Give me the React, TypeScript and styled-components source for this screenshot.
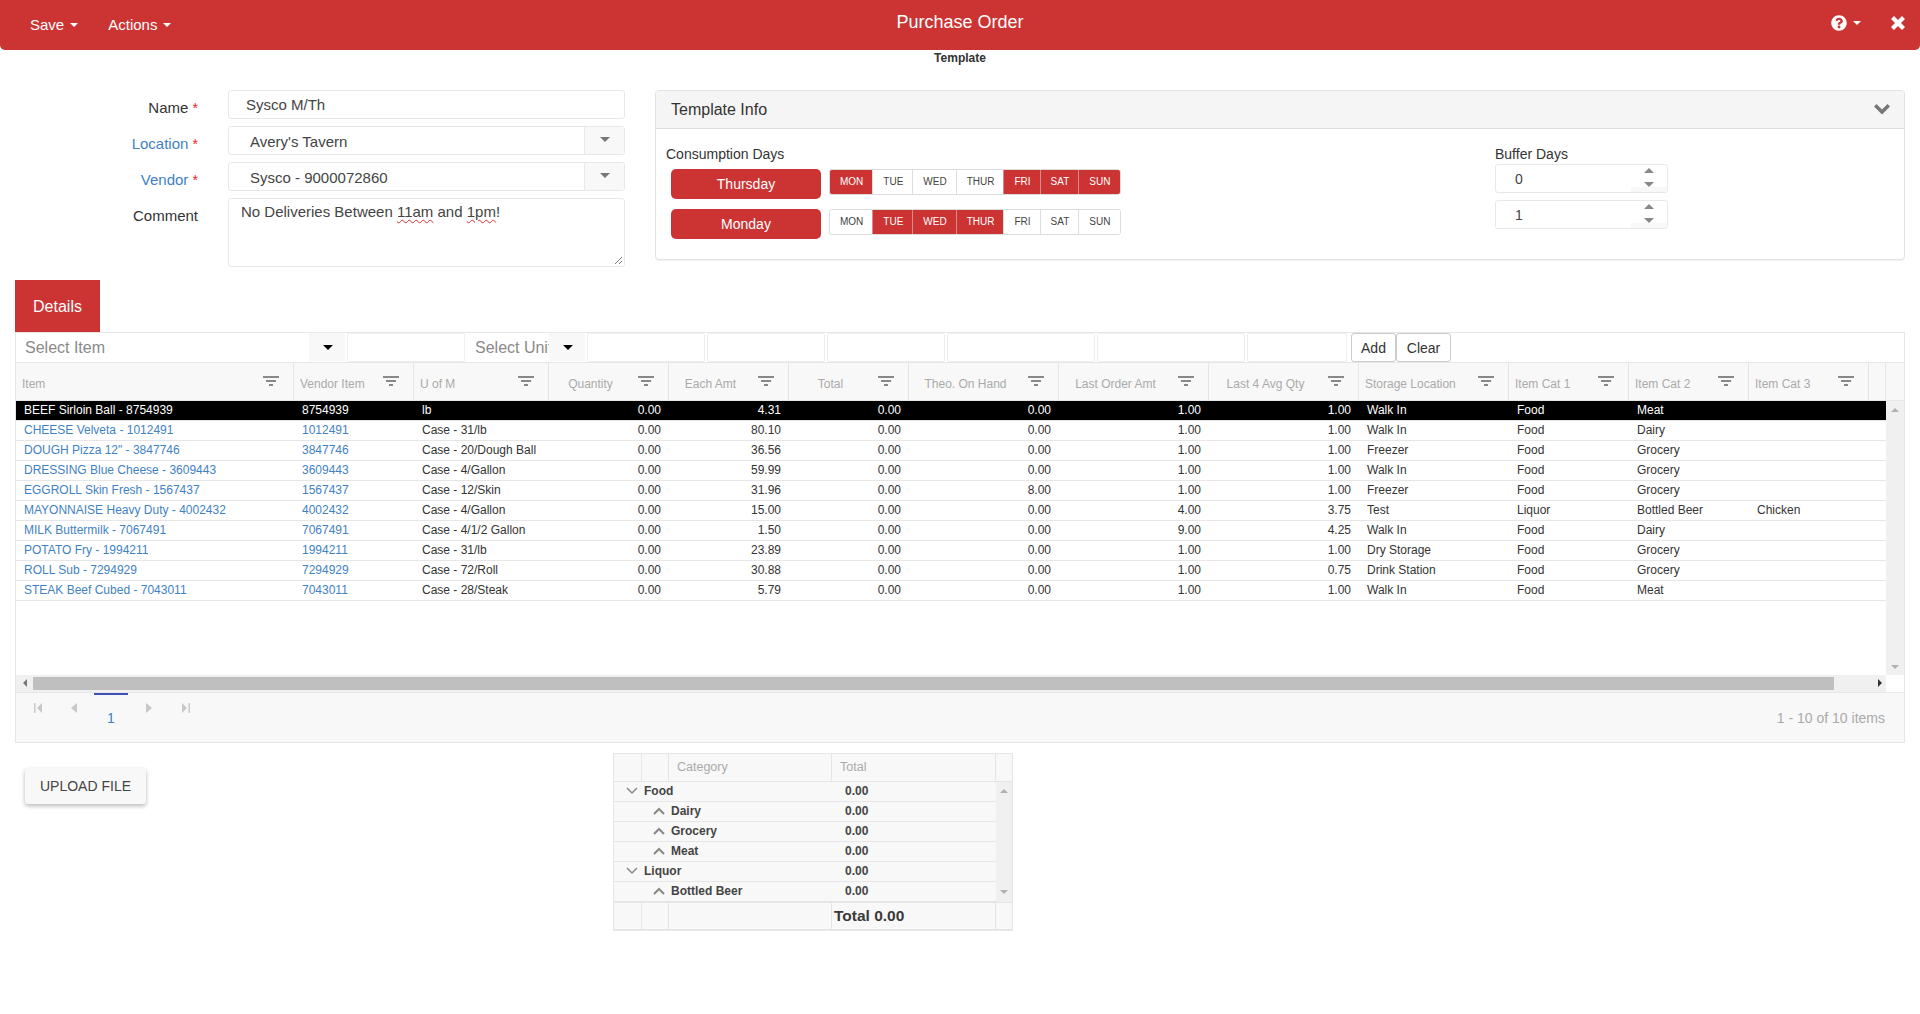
import React from "react";
import styled, { createGlobalStyle } from "styled-components";
import { FaQuestionCircle } from "react-icons/fa";

const RED = "#cc3333";
const LINE = "#e6e6e6";
const LINK = "#3f82c4";

const Global = createGlobalStyle`
  html, body { margin: 0; padding: 0; background: #fff; overflow: hidden; }
  * { box-sizing: border-box; }
  body { font-family: "Liberation Sans", Arial, sans-serif; color: #333; }
`;

const Page = styled.div`
  width: 1920px;
  height: 1014px;
`;

/* ---------- top bar ---------- */
const TopBar = styled.header`
  height: 50px;
  background: ${RED};
  border-radius: 0 0 5px 5px;
  color: #fff;
  display: grid;
  grid-template-columns: 1fr auto 1fr;
  align-items: center;
  padding: 0 15px;
`;
const Menus = styled.div`
  display: flex;
  gap: 30px;
  padding-left: 15px;
  margin-top: -1px;
`;
const Menu = styled.div`
  font-size: 15px;
  display: flex;
  align-items: center;
  gap: 6px;
`;
const Title = styled.div`
  font-size: 18px;
  line-height: 20px;
  margin-top: -7px;
`;
const TopRight = styled.div`
  display: flex;
  justify-content: flex-end;
  align-items: center;
  gap: 30px;
  margin-top: -4px;
`;
const HelpMenu = styled.div`
  display: flex;
  align-items: center;
  gap: 6px;
`;
const Caret = styled.span<{ $size?: number; $color?: string }>`
  display: inline-block;
  width: 0;
  height: 0;
  border-left: ${(p) => p.$size ?? 4}px solid transparent;
  border-right: ${(p) => p.$size ?? 4}px solid transparent;
  border-top: ${(p) => p.$size ?? 4}px solid ${(p) => p.$color ?? "#fff"};
`;
const CaretUp = styled(Caret)`
  border-top: 0;
  border-bottom: ${(p) => p.$size ?? 4}px solid ${(p) => p.$color ?? "#fff"};
`;
const Subtitle = styled.div`
  height: 40px;
  padding-top: 1px;
  text-align: center;
  font-size: 12px;
  font-weight: 700;
  line-height: 15px;
`;

/* ---------- form + template info ---------- */
const TopSection = styled.section`
  display: flex;
  height: 190px;
  align-items: flex-start;
`;
const Form = styled.div`
  width: 625px;
  display: grid;
  grid-template-columns: 198px 1fr;
  column-gap: 30px;
  row-gap: 7px;
`;
const Label = styled.div<{ $link?: boolean }>`
  font-size: 15px;
  line-height: 20px;
  padding-top: 8px;
  text-align: right;
  color: ${(p) => (p.$link ? LINK : "#333")};
`;
const Star = styled.span`
  color: #e8262a;
  font-size: 14px;
`;
const Field = styled.div`
  height: 29px;
  border: 1px solid #e8e8e8;
  border-radius: 3px;
  background: #fff;
  font-size: 15px;
  line-height: 27px;
  color: #444;
  padding-left: 17px;
`;
const SelectField = styled.div`
  height: 29px;
  border: 1px solid #e8e8e8;
  border-radius: 3px;
  display: flex;
  font-size: 15px;
  line-height: 29px;
  color: #444;
`;
const SelectText = styled.div`
  flex: 1;
  padding-left: 21px;
`;
const SelectArrow = styled.div`
  width: 40px;
  background: #f8f8f8;
  border-left: 1px solid #e8e8e8;
  display: flex;
  align-items: center;
  justify-content: center;
  padding-bottom: 3px;
`;
const CommentBox = styled.div`
  position: relative;
  height: 69px;
  border: 1px solid #e8e8e8;
  border-radius: 3px;
  font-size: 15px;
  line-height: 20px;
  color: #444;
  padding: 3px 12px;
`;
const Misspelt = styled.span`
  text-decoration: underline wavy #e03030 1px;
  text-underline-offset: 2px;
`;
const Grip = styled.svg`
  position: absolute;
  right: 1px;
  bottom: 1px;
  width: 9px;
  height: 9px;
`;

const Panel = styled.section`
  margin-left: 30px;
  width: 1250px;
  height: 170px;
  border: 1px solid #e2e2e2;
  border-radius: 4px;
  box-shadow: 0 1px 1px rgba(0, 0, 0, 0.05);
`;
const PanelHead = styled.div`
  height: 38px;
  background: #f5f5f5;
  border-bottom: 1px solid #ddd;
  border-radius: 3px 3px 0 0;
  display: flex;
  align-items: center;
  justify-content: space-between;
  padding: 0 14px 0 15px;
  font-size: 16px;
  color: #333;
`;
const PanelBody = styled.div`
  display: grid;
  grid-template-columns: 1fr 173px;
  padding: 15px 236px 0 10px;
`;
const SmallHead = styled.div`
  font-size: 14px;
  line-height: 20px;
`;
const DayRow = styled.div<{ $top: number }>`
  display: flex;
  gap: 8px;
  padding-left: 5px;
  margin-top: ${(p) => p.$top}px;
`;
const RedButton = styled.div`
  width: 150px;
  height: 30px;
  background: ${RED};
  color: #fff;
  border-radius: 5px;
  font-size: 14px;
  line-height: 30px;
  text-align: center;
`;
const DayGroup = styled.div`
  display: flex;
  height: 26px;
  border-radius: 3px;
  overflow: hidden;
  border: 1px solid #ddd;
`;
const Day = styled.div<{ $on: boolean }>`
  font-size: 10px;
  line-height: 24px;
  padding: 0 10px;
  background: ${(p) => (p.$on ? RED : "#fff")};
  color: ${(p) => (p.$on ? "#fff" : "#444")};
  box-shadow: -1px 0 0 ${(p) => (p.$on ? "#d98a8a" : "#ddd")};
`;
const BufferList = styled.div`
  display: flex;
  flex-direction: column;
  gap: 7px;
`;
const BufferBox = styled.div`
  position: relative;
  height: 29px;
  border: 1px solid #e8e8e8;
  border-radius: 3px;
  font-size: 14px;
  line-height: 28px;
  padding-left: 19px;
  color: #444;
`;
const Spin = styled.div`
  position: absolute;
  top: 0;
  right: 0;
  width: 36px;
  height: 27px;
  display: flex;
  flex-direction: column;
  align-items: center;
  justify-content: space-between;
  padding: 3px 0 5px;
  background: linear-gradient(to top, #f8f8f8 5px, transparent 5px);
`;

/* ---------- details grid ---------- */
const Tab = styled.div`
  width: 85px;
  height: 53px;
  margin-left: 15px;
  background: ${RED};
  color: #fff;
  font-size: 16px;
  line-height: 53px;
  text-align: center;
`;
const Grid = styled.section`
  margin: -1px 0 0 15px;
  width: 1890px;
  height: 411px;
  border: 1px solid ${LINE};
  display: flex;
  flex-direction: column;
`;
const Toolbar = styled.div`
  height: 30px;
  border-bottom: 1px solid ${LINE};
  display: flex;
  gap: 2px;
`;
const FilterBox = styled.div<{ $w: number }>`
  width: ${(p) => p.$w}px;
  height: 29px;
  border: 1px solid #efefef;
  border-radius: 2px;
`;
const Combo = styled.div<{ $w: number; $pad: number }>`
  width: ${(p) => p.$w}px;
  display: flex;
  height: 29px;
  padding-left: ${(p) => p.$pad}px;
`;
const ComboText = styled.div`
  flex: 1;
  overflow: hidden;
  white-space: nowrap;
  font-size: 16px;
  line-height: 30px;
  color: #8a8a8a;
`;
const ComboArrow = styled.div`
  width: 36px;
  height: 28px;
  background: #f8f8f8;
  display: flex;
  align-items: center;
  justify-content: center;
  padding-left: 2px;
`;
const ToolButtons = styled.div`
  display: flex;
  margin-left: 2px;
`;
const ToolButton = styled.div<{ $w: number }>`
  width: ${(p) => p.$w}px;
  height: 29px;
  border: 1px solid #ccc;
  border-radius: 3px;
  background: #fff;
  font-size: 14px;
  line-height: 28px;
  text-align: center;
  color: #333;
`;

const COLS = "278px 120px 135px 120px 120px 120px 150px 150px 150px 150px 120px 120px 120px";
const HeaderRow = styled.div`
  height: 38px;
  display: grid;
  grid-template-columns: ${COLS} 17px 18px;
  background: #f8f8f8;
  border-bottom: 1px solid ${LINE};
`;
const HeadCell = styled.div`
  display: flex;
  align-items: center;
  border-right: 1px solid ${LINE};
  padding: 0 14px 0 6px;
  min-width: 0;
`;
const HeadBlank = styled.div<{ $edge?: boolean }>`
  border-right: ${(p) => (p.$edge ? `1px solid ${LINE}` : "0")};
`;
const HeadLabel = styled.div<{ $center?: boolean }>`
  flex: 1;
  font-size: 12px;
  line-height: 16px;
  padding-top: 4px;
  color: #aaa;
  white-space: nowrap;
  text-align: ${(p) => (p.$center ? "center" : "left")};
  padding-right: ${(p) => (p.$center ? 12 : 0)}px;
`;
const Body = styled.div`
  display: flex;
  height: 274px;
`;
const Rows = styled.div`
  flex: 1;
  min-width: 0;
`;
const Row = styled.div<{ $selected?: boolean }>`
  display: grid;
  grid-template-columns: ${COLS} 17px;
  height: 20px;
  border-bottom: 1px solid ${LINE};
  background: ${(p) => (p.$selected ? "#000" : "#fff")};
  color: ${(p) => (p.$selected ? "#fff" : "#333")};
`;
const Cell = styled.div<{ $right?: boolean; $link?: boolean }>`
  padding: 0 8px;
  font-size: 12px;
  line-height: 18px;
  white-space: nowrap;
  overflow: hidden;
  text-align: ${(p) => (p.$right ? "right" : "left")};
  color: ${(p) => (p.$link ? LINK : "inherit")};
`;
const SelectedCell = styled(Cell)`
  color: #fff;
`;
const VScroll = styled.div`
  width: 18px;
  background: #f0f0f0;
  display: flex;
  flex-direction: column;
  align-items: center;
  justify-content: space-between;
  padding: 7px 0 6px;
`;
const HScroll = styled.div`
  height: 17px;
  display: flex;
`;
const HTrack = styled.div`
  flex: 1;
  background: #f0f0f0;
  display: flex;
  align-items: center;
  justify-content: space-between;
  padding: 0 4px 2px 7px;
`;
const HThumb = styled.div`
  width: 1801px;
  height: 13px;
  margin: 2px auto 0 6px;
  background: #bfbfbf;
`;
const Corner = styled.div`
  width: 18px;
  background: #fff;
`;
const Triangle = styled.svg`
  flex: none;
  display: block;
`;
const Pager = styled.div`
  flex: 1;
  background: #f8f8f8;
  border-top: 1px solid ${LINE};
  display: flex;
  justify-content: space-between;
`;
const PagerLeft = styled.div`
  position: relative;
  width: 200px;
`;
const PagerIcon = styled.svg<{ $x: number }>`
  position: absolute;
  top: 10px;
  left: ${(p) => p.$x}px;
`;
const PageNum = styled.div`
  position: absolute;
  top: 0;
  left: 78px;
  width: 34px;
  height: 100%;
  border-top: 2px solid #3f51b5;
  text-align: center;
  font-size: 14px;
  line-height: 16px;
  padding-top: 15px;
  color: ${LINK};
`;
const PagerInfo = styled.div`
  font-size: 14px;
  line-height: 16px;
  padding: 17px 19px 0 0;
  color: #aaa;
`;

/* ---------- bottom ---------- */
const Bottom = styled.section`
  display: flex;
  align-items: flex-start;
  padding: 10px 0 0 25px;
`;
const UploadButton = styled.div`
  width: 121px;
  height: 36px;
  margin-top: 15px;
  background: #f8f8f8;
  border-radius: 3px;
  box-shadow: 0 2px 4px rgba(0, 0, 0, 0.28);
  font-size: 14px;
  line-height: 36px;
  text-align: center;
  color: #444;
`;
const Summary = styled.section`
  margin-left: 467px;
  width: 400px;
  height: 178px;
  border: 1px solid ${LINE};
  border-bottom-width: 2px;
  background: #f8f8f8;
  display: flex;
  flex-direction: column;
`;
const SCOLS = "28px 27px 163px 164px 16px";
const SumHead = styled.div`
  height: 28px;
  display: grid;
  grid-template-columns: ${SCOLS};
  border-bottom: 1px solid ${LINE};
`;
const SumHeadCell = styled.div`
  border-right: 1px solid ${LINE};
  padding-left: 8px;
  font-size: 12.5px;
  line-height: 26px;
  color: #aaa;
`;
const SumBody = styled.div`
  display: flex;
  height: 121px;
`;
const SumRows = styled.div`
  flex: 1;
`;
const SumRow = styled.div`
  display: grid;
  grid-template-columns: 218px 164px;
  height: 20px;
  border-bottom: 1px solid ${LINE};
  font-size: 12px;
  font-weight: 700;
  line-height: 18px;
  color: #444;
`;
const SumName = styled.div<{ $level: number }>`
  display: flex;
  align-items: center;
  gap: 6px;
  padding-left: ${(p) => (p.$level ? 39 : 12)}px;
`;
const SumValue = styled.div`
  padding-left: 13px;
`;
const SumScroll = styled.div`
  width: 16px;
  background: #f0f0f0;
  display: flex;
  flex-direction: column;
  align-items: center;
  justify-content: space-between;
  padding: 7px 0 8px;
`;
const SumFoot = styled.div`
  flex: 1;
  display: grid;
  grid-template-columns: ${SCOLS};
  border-top: 1px solid ${LINE};
`;
const SumFootCell = styled.div`
  border-right: 1px solid ${LINE};
  padding-left: 2px;
  font-size: 15.5px;
  font-weight: 700;
  line-height: 26px;
  white-space: nowrap;
  color: #3a3a3a;
`;

/* ---------- drawings ---------- */
const FilterIcon = () => (
  <svg width="16" height="11" viewBox="0 0 16 11" fill="#888">
    <rect x="0" y="0" width="16" height="2" />
    <rect x="3" y="4" width="10" height="2" />
    <rect x="6" y="8" width="4" height="2" />
  </svg>
);
const Chevron = ({ up }: { up?: boolean }) => (
  <svg width="12" height="8" viewBox="0 0 12 8" fill="none" stroke="#888" strokeWidth={up ? 2 : 1.5}>
    <path d={up ? "M1 7 L6 2 L11 7" : "M1 1 L6 6 L11 1"} />
  </svg>
);
const ArrowUp = ({ c = "#b0b0b0" }: { c?: string }) => (
  <Triangle width="8" height="4" viewBox="0 0 8 4" fill={c}>
    <path d="M0 4 L4 0 L8 4Z" />
  </Triangle>
);
const ArrowDown = ({ c = "#b0b0b0" }: { c?: string }) => (
  <Triangle width="8" height="4" viewBox="0 0 8 4" fill={c}>
    <path d="M0 0 L4 4 L8 0Z" />
  </Triangle>
);
const ArrowSide = ({ right, c }: { right?: boolean; c: string }) => (
  <Triangle width="4" height="8" viewBox="0 0 4 8" fill={c}>
    <path d={right ? "M0 0 L4 4 L0 8Z" : "M4 0 L0 4 L4 8Z"} />
  </Triangle>
);

const headers: [string, boolean][] = [
  ["Item", false], ["Vendor Item", false], ["U of M", false], ["Quantity", true],
  ["Each Amt", true], ["Total", true], ["Theo. On Hand", true], ["Last Order Amt", true],
  ["Last 4 Avg Qty", true], ["Storage Location", false], ["Item Cat 1", false],
  ["Item Cat 2", false], ["Item Cat 3", false],
];

const rows: string[][] = [
  ["BEEF Sirloin Ball - 8754939", "8754939", "lb", "0.00", "4.31", "0.00", "0.00", "1.00", "1.00", "Walk In", "Food", "Meat", ""],
  ["CHEESE Velveta - 1012491", "1012491", "Case - 31/lb", "0.00", "80.10", "0.00", "0.00", "1.00", "1.00", "Walk In", "Food", "Dairy", ""],
  ['DOUGH Pizza 12" - 3847746', "3847746", "Case - 20/Dough Ball", "0.00", "36.56", "0.00", "0.00", "1.00", "1.00", "Freezer", "Food", "Grocery", ""],
  ["DRESSING Blue Cheese - 3609443", "3609443", "Case - 4/Gallon", "0.00", "59.99", "0.00", "0.00", "1.00", "1.00", "Walk In", "Food", "Grocery", ""],
  ["EGGROLL Skin Fresh - 1567437", "1567437", "Case - 12/Skin", "0.00", "31.96", "0.00", "8.00", "1.00", "1.00", "Freezer", "Food", "Grocery", ""],
  ["MAYONNAISE Heavy Duty - 4002432", "4002432", "Case - 4/Gallon", "0.00", "15.00", "0.00", "0.00", "4.00", "3.75", "Test", "Liquor", "Bottled Beer", "Chicken"],
  ["MILK Buttermilk - 7067491", "7067491", "Case - 4/1/2 Gallon", "0.00", "1.50", "0.00", "0.00", "9.00", "4.25", "Walk In", "Food", "Dairy", ""],
  ["POTATO Fry - 1994211", "1994211", "Case - 31/lb", "0.00", "23.89", "0.00", "0.00", "1.00", "1.00", "Dry Storage", "Food", "Grocery", ""],
  ["ROLL Sub - 7294929", "7294929", "Case - 72/Roll", "0.00", "30.88", "0.00", "0.00", "1.00", "0.75", "Drink Station", "Food", "Grocery", ""],
  ["STEAK Beef Cubed - 7043011", "7043011", "Case - 28/Steak", "0.00", "5.79", "0.00", "0.00", "1.00", "1.00", "Walk In", "Food", "Meat", ""],
];

const DAY_NAMES = ["MON", "TUE", "WED", "THUR", "FRI", "SAT", "SUN"];
const schedules: { name: string; on: string[] }[] = [
  { name: "Thursday", on: ["MON", "FRI", "SAT", "SUN"] },
  { name: "Monday", on: ["TUE", "WED", "THUR"] },
];

const tree: [string, number][] = [
  ["Food", 0], ["Dairy", 1], ["Grocery", 1], ["Meat", 1], ["Liquor", 0], ["Bottled Beer", 1],
];

const isNumeric = (i: number) => i >= 3 && i <= 8;

export default function App() {
  return (
    <Page>
      <Global />
      <TopBar>
        <Menus>
          <Menu>Save <Caret /></Menu>
          <Menu>Actions <Caret /></Menu>
        </Menus>
        <Title>Purchase Order</Title>
        <TopRight>
          <HelpMenu>
            <FaQuestionCircle size={16} />
            <Caret />
          </HelpMenu>
          <svg width="14" height="14" viewBox="0 0 14 14" fill="#fff">
            <path d="M3 0 L7 4 L11 0 L14 3 L10 7 L14 11 L11 14 L7 10 L3 14 L0 11 L4 7 L0 3Z" />
          </svg>
        </TopRight>
      </TopBar>
      <Subtitle>Template</Subtitle>

      <TopSection>
        <Form>
          <Label>Name <Star>*</Star></Label>
          <Field>Sysco M/Th</Field>
          <Label $link>Location <Star>*</Star></Label>
          <SelectField>
            <SelectText>Avery's Tavern</SelectText>
            <SelectArrow><Caret $size={5} $color="#777" /></SelectArrow>
          </SelectField>
          <Label $link>Vendor <Star>*</Star></Label>
          <SelectField>
            <SelectText>Sysco - 9000072860</SelectText>
            <SelectArrow><Caret $size={5} $color="#777" /></SelectArrow>
          </SelectField>
          <Label>Comment</Label>
          <CommentBox>
            No Deliveries Between <Misspelt>11am</Misspelt> and <Misspelt>1pm</Misspelt>!
            <Grip viewBox="0 0 9 9" stroke="#777" strokeWidth="1">
              <path d="M1 8 L8 1 M5 8 L8 5" />
            </Grip>
          </CommentBox>
        </Form>

        <Panel>
          <PanelHead>
            Template Info
            <svg width="16" height="11" viewBox="0 0 16 11" fill="#777">
              <path d="M2.5 0 L8 5.5 L13.5 0 L16 2.5 L8 10.5 L0 2.5Z" />
            </svg>
          </PanelHead>
          <PanelBody>
            <div>
              <SmallHead>Consumption Days</SmallHead>
              {schedules.map((s, i) => (
                <DayRow key={s.name} $top={i === 0 ? 5 : 10}>
                  <RedButton>{s.name}</RedButton>
                  <DayGroup>
                    {DAY_NAMES.map((d) => <Day key={d} $on={s.on.includes(d)}>{d}</Day>)}
                  </DayGroup>
                </DayRow>
              ))}
            </div>
            <div>
              <SmallHead>Buffer Days</SmallHead>
              <BufferList>
                {["0", "1"].map((v) => (
                  <BufferBox key={v}>
                    {v}
                    <Spin>
                      <CaretUp $size={5} $color="#888" />
                      <Caret $size={5} $color="#888" />
                    </Spin>
                  </BufferBox>
                ))}
              </BufferList>
            </div>
          </PanelBody>
        </Panel>
      </TopSection>

      <Tab>Details</Tab>
      <Grid>
        <Toolbar>
          <Combo $w={329} $pad={9}>
            <ComboText>Select Item</ComboText>
            <ComboArrow><Caret $size={5} $color="#000" /></ComboArrow>
          </Combo>
          <FilterBox $w={118} />
          <Combo $w={118} $pad={8}>
            <ComboText>Select Unit</ComboText>
            <ComboArrow><Caret $size={5} $color="#000" /></ComboArrow>
          </Combo>
          <FilterBox $w={118} />
          <FilterBox $w={118} />
          <FilterBox $w={118} />
          <FilterBox $w={148} />
          <FilterBox $w={148} />
          <FilterBox $w={100} />
          <ToolButtons>
            <ToolButton $w={45}>Add</ToolButton>
            <ToolButton $w={55}>Clear</ToolButton>
          </ToolButtons>
        </Toolbar>
        <HeaderRow>
          {headers.map(([h, c]) => (
            <HeadCell key={h}>
              <HeadLabel $center={c}>{h}</HeadLabel>
              <FilterIcon />
            </HeadCell>
          ))}
          <HeadBlank $edge />
          <HeadBlank />
        </HeaderRow>
        <Body>
          <Rows>
            {rows.map((r, ri) => (
              <Row key={r[1]} $selected={ri === 0}>
                {r.map((v, i) =>
                  ri === 0 ? (
                    <SelectedCell key={i} $right={isNumeric(i)}>{v}</SelectedCell>
                  ) : (
                    <Cell key={i} $right={isNumeric(i)} $link={i < 2}>{v}</Cell>
                  )
                )}
              </Row>
            ))}
          </Rows>
          <VScroll>
            <ArrowUp />
            <ArrowDown />
          </VScroll>
        </Body>
        <HScroll>
          <HTrack>
            <ArrowSide c="#777" />
            <HThumb />
            <ArrowSide right c="#333" />
          </HTrack>
          <Corner />
        </HScroll>
        <Pager>
          <PagerLeft>
            <PagerIcon $x={18} width="8" height="10" viewBox="0 0 8 10" fill="#c8c8c8">
              <path d="M0 0 H1.5 V10 H0Z M8 0 V10 L3 5Z" />
            </PagerIcon>
            <PagerIcon $x={55} width="6" height="10" viewBox="0 0 6 10" fill="#c8c8c8">
              <path d="M6 0 V10 L0 5Z" />
            </PagerIcon>
            <PageNum>1</PageNum>
            <PagerIcon $x={130} width="6" height="10" viewBox="0 0 6 10" fill="#c8c8c8">
              <path d="M0 0 V10 L6 5Z" />
            </PagerIcon>
            <PagerIcon $x={166} width="8" height="10" viewBox="0 0 8 10" fill="#c8c8c8">
              <path d="M8 0 H6.5 V10 H8Z M0 0 V10 L5 5Z" />
            </PagerIcon>
          </PagerLeft>
          <PagerInfo>1 - 10 of 10 items</PagerInfo>
        </Pager>
      </Grid>

      <Bottom>
        <UploadButton>UPLOAD FILE</UploadButton>
        <Summary>
          <SumHead>
            <SumHeadCell />
            <SumHeadCell />
            <SumHeadCell>Category</SumHeadCell>
            <SumHeadCell>Total</SumHeadCell>
            <div />
          </SumHead>
          <SumBody>
            <SumRows>
              {tree.map(([name, level]) => (
                <SumRow key={name}>
                  <SumName $level={level}>
                    <Chevron up={level === 1} />
                    {name}
                  </SumName>
                  <SumValue>0.00</SumValue>
                </SumRow>
              ))}
            </SumRows>
            <SumScroll>
              <ArrowUp />
              <ArrowDown />
            </SumScroll>
          </SumBody>
          <SumFoot>
            <SumFootCell />
            <SumFootCell />
            <SumFootCell />
            <SumFootCell>Total 0.00</SumFootCell>
            <div />
          </SumFoot>
        </Summary>
      </Bottom>
    </Page>
  );
}
